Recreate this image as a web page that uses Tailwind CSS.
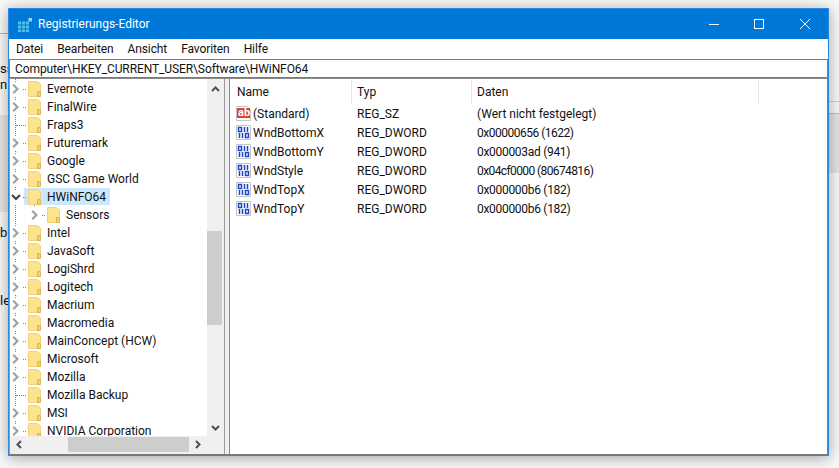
<!DOCTYPE html>
<html>
<head>
<script src="https://cdn.jsdelivr.net/npm/@tailwindcss/browser@4"></script>
</head>
<body class="w-[839px] h-[468px] overflow-hidden relative bg-[#f8f8f8] font-['Roboto',sans-serif] text-[12px] text-[#111]">
<svg width="0" height="0" class="absolute">
  <defs>
    <symbol id="folder" viewBox="0 0 13 16">
      <path d="M0.500 0.500H9.500L12.500 3V15.500H0.500Z" fill="#fde28f" stroke="#f2d27a"/>
      <path d="M9.500 15.500V10.500H12.500V15.500Z" fill="#f7cf6a" stroke="#e0b64f"/>
    </symbol>
    <symbol id="closed" viewBox="0 0 8 10">
      <path d="M1.200 0.800L5.400 5L1.200 9.200" fill="none" stroke="#a0a0a0" stroke-width="2.200"/>
    </symbol>
    <symbol id="open" viewBox="0 0 10 8">
      <path d="M1 2L5 6L9 2" fill="none" stroke="#404040" stroke-width="2"/>
    </symbol>
    <symbol id="dword" viewBox="0 0 15 15">
      <path d="M0.500 0.500H14.500V14.500H0.500Z" fill="#fff" stroke="#c4c4c4"/>
      <path d="M2.500 2.500h3v4h-3zM8.500 2v5M11.500 2v5M3.500 8v5M6.500 8v5M9.500 8.500h3v4h-3z" fill="none" stroke="#1c46c8" stroke-width="1.500"/>
    </symbol>
    <symbol id="sz" viewBox="0 0 15 15">
      <path d="M0.500 0.500H11L14.500 4V14.500H0.500Z" fill="#fff" stroke="#c4c4c4"/>
      <rect x="1" y="2" width="13" height="10" fill="#d9462a"/>
    </symbol>
  </defs>
</svg>

<!-- stuff behind the window -->
<div class="absolute left-0 top-[33px] w-[8px] h-px bg-[#a9b4c2]"></div>
<div class="absolute left-0 top-[115px] w-[8px] h-[97px] bg-[#e6e6e6]"></div>
<div class="absolute right-0 top-[101px] w-[10px] h-px bg-[#c5ced6]"></div>
<div class="absolute right-0 top-[113px] w-[10px] h-[60px] bg-[#e4e4e4] border-t border-[#bdbdbd]"></div>
<div class="absolute left-0 top-[61px] leading-[16px] text-[13px]">ss</div>
<div class="absolute left-0 top-[77px] leading-[16px] text-[13px]">n</div>
<div class="absolute left-0 top-[225px] leading-[16px] text-[13px]">b</div>
<div class="absolute left-0 top-[293px] leading-[16px] text-[13px]">le</div>

<!-- window -->
<div class="absolute left-[8px] top-[8px] w-[821px] h-[448px] flex flex-col bg-white border border-[#2b8ae0] shadow-[0_2px_14px_rgba(0,0,0,0.35)]">
  <div class="h-[30px] shrink-0 bg-[#0078d7] flex items-center text-white">
    <svg class="ml-[9px] mt-[1px]" width="14" height="14" viewBox="0 0 16 16">
      <path d="M0 4h3.500v3.500H0zM4.500 4h3.500v3.500H4.500zM9 4h3.500v3.500H9zM0 8.500h3.500v3.500H0zM4.500 8.500h3.500v3.500H4.500zM9 8.500h3.500v3.500H9zM0 13h3.500v3H0zM4.500 13h3.500v3H4.500zM9 13h3.500v3H9z" fill="#4fc3e8"/>
      <rect x="12" y="0" width="4" height="4" fill="#8fdcf2"/>
    </svg>
    <span class="ml-[6px]">Registrierungs-Editor</span>
    <div class="ml-auto flex items-center">
      <svg width="10" height="1" class="mr-[35px]"><rect width="10" height="1" fill="#fff"/></svg>
      <svg width="10" height="10" class="mr-[36px]"><rect x="0.500" y="0.500" width="9" height="9" fill="none" stroke="#fff"/></svg>
      <svg width="10" height="10" class="mr-[18px]"><path d="M0 0L10 10M10 0L0 10" stroke="#fff" stroke-width="1"/></svg>
    </div>
  </div>
  <div class="h-[20px] shrink-0 flex items-center gap-[14px] pl-[7px] tracking-[-0.1px]">
    <span>Datei</span><span>Bearbeiten</span><span>Ansicht</span><span>Favoriten</span><span>Hilfe</span>
  </div>
  <div class="h-[19px] shrink-0 flex items-center pl-[5px] border border-[#7a7a7a] tracking-[-0.1px]">Computer\HKEY_CURRENT_USER\Software\HWiNFO64</div>
  <div class="h-px shrink-0 bg-[#8a8a8a]"></div>
  <div class="flex-1 min-h-0 flex bg-[#f0f0f0] border-r border-b border-[#7a7a7a]">
    <!-- tree pane -->
    <div class="w-[216px] shrink-0 flex flex-col border-x border-[#9a9a9a]">
      <div class="flex-1 min-h-0 flex overflow-hidden">
        <div class="flex-1 pt-px overflow-hidden bg-white relative">
          <div class="absolute left-[5px] top-0 h-full border-l border-dotted border-[#808080]"></div>
          <div id="tree" class="relative"></div>
        </div>
        <div class="w-[17px] shrink-0 bg-[#f0f0f0] flex flex-col items-center relative">
          <svg class="mt-[7px]" width="9" height="6" viewBox="0 0 9 6"><path d="M1 5L4.500 1.500L8 5" fill="none" stroke="#505050" stroke-width="2"/></svg>
          <div class="absolute left-0 top-[152px] w-[15px] h-[94px] bg-[#cdcdcd]"></div>
          <svg class="mt-auto mb-[5px]" width="9" height="6" viewBox="0 0 9 6"><path d="M1 1L4.500 4.500L8 1" fill="none" stroke="#505050" stroke-width="2"/></svg>
        </div>
      </div>
      <div class="h-[18px] shrink-0 bg-[#f0f0f0] flex items-center justify-between pl-[6px] pb-[2px] relative">
        <svg width="6" height="9" viewBox="0 0 6 9"><path d="M5 1L1.500 4.500L5 8" fill="none" stroke="#505050" stroke-width="2"/></svg>
        <div class="absolute left-[58px] top-px w-[121px] h-[15px] bg-[#cdcdcd]"></div>
        <svg class="mr-[23px]" width="6" height="9" viewBox="0 0 6 9"><path d="M1 1L4.500 4.500L1 8" fill="none" stroke="#505050" stroke-width="2"/></svg>
      </div>
    </div>
    <div class="w-[4px] shrink-0"></div>
    <!-- list pane -->
    <div class="flex-1 min-w-0 bg-white border-l border-[#8a8a8a]">
      <div class="h-[24px] mt-px flex items-center">
        <div class="w-[122px] h-full pl-[7px] flex items-center border-r border-[#e5e5e5]">Name</div>
        <div class="w-[120px] h-full pl-[5px] flex items-center border-r border-[#e5e5e5]">Typ</div>
        <div class="w-[287px] h-full pl-[5px] flex items-center border-r border-[#e5e5e5]">Daten</div>
      </div>
      <div id="values"></div>
    </div>
  </div>
</div>

<script>
  const keys = [
    ["Evernote", 0, "c"], ["FinalWire", 0, "c"], ["Fraps3", 0, "n"], ["Futuremark", 0, "c"],
    ["Google", 0, "c"], ["GSC Game World", 0, "c"], ["HWiNFO64", 0, "o"], ["Sensors", 1, "c"],
    ["Intel", 0, "c"], ["JavaSoft", 0, "c"], ["LogiShrd", 0, "c"], ["Logitech", 0, "c"],
    ["Macrium", 0, "c"], ["Macromedia", 0, "c"], ["MainConcept (HCW)", 0, "c"], ["Microsoft", 0, "c"],
    ["Mozilla", 0, "c"], ["Mozilla Backup", 0, "n"], ["MSI", 0, "c"], ["NVIDIA Corporation", 0, "c"]
  ];
  let treeHtml = "";
  for (const [name, level, state] of keys) {
    const selected = name === "HWiNFO64";
    let marker = '<div class="w-[8px] h-[14px] shrink-0"></div>';
    if (state === "c") marker = '<div class="w-[8px] h-[14px] shrink-0 flex items-center bg-white"><svg width="8" height="10"><use href="#closed"/></svg></div>';
    if (state === "o") marker = '<div class="w-[8px] h-[14px] shrink-0 flex items-center bg-white"><svg class="-ml-px shrink-0" width="10" height="8"><use href="#open"/></svg></div>';
    const dots = state === "n"
      ? '<div class="w-[10px] -ml-[4px] mr-[2px] shrink-0 border-t border-dotted border-[#808080]"></div>'
      : '<div class="w-[3px] ml-[3px] mr-[2px] shrink-0 border-t border-dotted border-[#808080]"></div>';
    treeHtml += `<div class="h-[18px] flex items-center relative" style="padding-left:${2 + level * 19}px">
      ${selected ? '<div class="absolute left-[14px] top-0 w-[86px] h-[17px] bg-[#cce8ff]"></div><div class="absolute left-[24px] top-[17px] w-px h-px bg-[#808080]"></div>' : ""}
      <div class="relative flex items-center">${marker}${dots}
        <svg class="shrink-0" width="13" height="16"><use href="#folder"/></svg>
        <span class="ml-[6px] whitespace-nowrap">${name}</span>
      </div>
    </div>`;
  }
  document.getElementById("tree").innerHTML = treeHtml;

  const values = [
    ["sz", "(Standard)", "REG_SZ", "(Wert nicht festgelegt)", ""],
    ["dword", "WndBottomX", "REG_DWORD", "0x00000656 (1622)", "tracking-[-0.5px]"],
    ["dword", "WndBottomY", "REG_DWORD", "0x000003ad (941)", "tracking-[-0.3px]"],
    ["dword", "WndStyle", "REG_DWORD", "0x04cf0000 (80674816)", "tracking-[-0.6px]"],
    ["dword", "WndTopX", "REG_DWORD", "0x000000b6 (182)", "tracking-[-0.3px]"],
    ["dword", "WndTopY", "REG_DWORD", "0x000000b6 (182)", "tracking-[-0.3px]"]
  ];
  let valuesHtml = "";
  for (const [icon, name, type, data, spacing] of values) {
    const glyph = icon === "sz"
      ? '<span class="absolute left-[2px] top-[1px] font-[\'Liberation_Sans\'] text-[11px] leading-[11px] font-bold text-white">ab</span>'
      : "";
    valuesHtml += `<div class="h-[19px] flex items-center">
      <div class="w-[122px] flex items-center pl-[6px]">
        <div class="relative w-[15px] h-[15px] shrink-0"><svg width="15" height="15"><use href="#${icon}"/></svg>${glyph}</div>
        <span class="ml-[2px] whitespace-nowrap">${name}</span>
      </div>
      <div class="w-[120px] pl-[5px]">${type}</div>
      <div class="pl-[5px] whitespace-nowrap ${spacing}">${data}</div>
    </div>`;
  }
  document.getElementById("values").innerHTML = valuesHtml;
</script>
</body>
</html>
